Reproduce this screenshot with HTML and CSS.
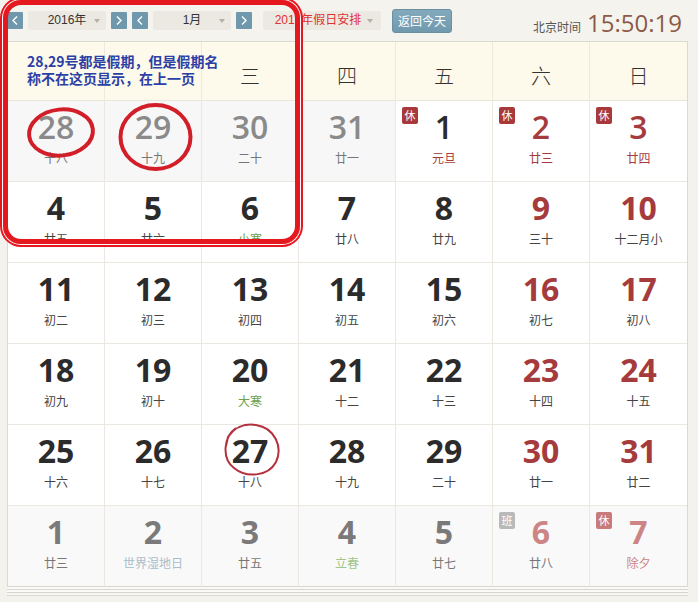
FILE: index.html
```html
<!DOCTYPE html>
<html lang="zh-CN">
<head>
<meta charset="utf-8">
<title>万年历</title>
<link rel="stylesheet" href="styles.css">
</head>
<body>
<div class="page">
  <div class="topbar">
    <span class="arrow"><svg viewBox="0 0 16 17" width="16" height="17"><path d="M10 4.5 L6 8.5 L10 12.5" fill="none" stroke="#fff" stroke-width="1.4"/></svg></span>
    <span class="sel sel-ym">2016年<i class="caret"></i></span>
    <span class="arrow"><svg viewBox="0 0 16 17" width="16" height="17"><path d="M6 4.5 L10 8.5 L6 12.5" fill="none" stroke="#fff" stroke-width="1.4"/></svg></span>
    <span class="arrow arrow-gap"><svg viewBox="0 0 16 17" width="16" height="17"><path d="M10 4.5 L6 8.5 L10 12.5" fill="none" stroke="#fff" stroke-width="1.4"/></svg></span>
    <span class="sel sel-ym">1月<i class="caret"></i></span>
    <span class="arrow"><svg viewBox="0 0 16 17" width="16" height="17"><path d="M6 4.5 L10 8.5 L6 12.5" fill="none" stroke="#fff" stroke-width="1.4"/></svg></span>
    <span class="sel sel-hol">2016年假日安排<i class="caret caret-inline"></i></span>
    <span class="today-btn">返回今天</span>
    <span class="clock"><span class="clock-label">北京时间</span><span class="clock-time">15:50:19</span></span>
  </div>

  <div class="cal">
    <div class="week">
      <div class="wd"></div>
      <div class="wd"></div>
      <div class="wd">三</div>
      <div class="wd">四</div>
      <div class="wd">五</div>
      <div class="wd">六</div>
      <div class="wd">日</div>
    </div>
    <div class="grid">
      <div class="cell other"><div class="num">28</div><div class="lunar">十八</div></div>
      <div class="cell other"><div class="num">29</div><div class="lunar">十九</div></div>
      <div class="cell other"><div class="num">30</div><div class="lunar">二十</div></div>
      <div class="cell other"><div class="num">31</div><div class="lunar">廿一</div></div>
      <div class="cell first"><span class="badge">休</span><div class="num">1</div><div class="lunar red">元旦</div></div>
      <div class="cell first wkend"><span class="badge">休</span><div class="num">2</div><div class="lunar red">廿三</div></div>
      <div class="cell first wkend last-col"><span class="badge">休</span><div class="num">3</div><div class="lunar red">廿四</div></div>

      <div class="cell"><div class="num">4</div><div class="lunar">廿五</div></div>
      <div class="cell"><div class="num">5</div><div class="lunar">廿六</div></div>
      <div class="cell"><div class="num">6</div><div class="lunar green">小寒</div></div>
      <div class="cell"><div class="num">7</div><div class="lunar">廿八</div></div>
      <div class="cell"><div class="num">8</div><div class="lunar">廿九</div></div>
      <div class="cell wkend"><div class="num">9</div><div class="lunar">三十</div></div>
      <div class="cell wkend last-col"><div class="num">10</div><div class="lunar">十二月小</div></div>

      <div class="cell"><div class="num">11</div><div class="lunar">初二</div></div>
      <div class="cell"><div class="num">12</div><div class="lunar">初三</div></div>
      <div class="cell"><div class="num">13</div><div class="lunar">初四</div></div>
      <div class="cell"><div class="num">14</div><div class="lunar">初五</div></div>
      <div class="cell"><div class="num">15</div><div class="lunar">初六</div></div>
      <div class="cell wkend"><div class="num">16</div><div class="lunar">初七</div></div>
      <div class="cell wkend last-col"><div class="num">17</div><div class="lunar">初八</div></div>

      <div class="cell"><div class="num">18</div><div class="lunar">初九</div></div>
      <div class="cell"><div class="num">19</div><div class="lunar">初十</div></div>
      <div class="cell"><div class="num">20</div><div class="lunar green">大寒</div></div>
      <div class="cell"><div class="num">21</div><div class="lunar">十二</div></div>
      <div class="cell"><div class="num">22</div><div class="lunar">十三</div></div>
      <div class="cell wkend"><div class="num">23</div><div class="lunar">十四</div></div>
      <div class="cell wkend last-col"><div class="num">24</div><div class="lunar">十五</div></div>

      <div class="cell"><div class="num">25</div><div class="lunar">十六</div></div>
      <div class="cell"><div class="num">26</div><div class="lunar">十七</div></div>
      <div class="cell"><div class="num">27</div><div class="lunar">十八</div></div>
      <div class="cell"><div class="num">28</div><div class="lunar">十九</div></div>
      <div class="cell"><div class="num">29</div><div class="lunar">二十</div></div>
      <div class="cell wkend"><div class="num">30</div><div class="lunar">廿一</div></div>
      <div class="cell wkend last-col"><div class="num">31</div><div class="lunar">廿二</div></div>

      <div class="cell next"><div class="num">1</div><div class="lunar">廿三</div></div>
      <div class="cell next"><div class="num">2</div><div class="lunar blue">世界湿地日</div></div>
      <div class="cell next"><div class="num">3</div><div class="lunar">廿五</div></div>
      <div class="cell next"><div class="num">4</div><div class="lunar green">立春</div></div>
      <div class="cell next"><div class="num">5</div><div class="lunar">廿七</div></div>
      <div class="cell next wkend"><span class="badge work">班</span><div class="num">6</div><div class="lunar">廿八</div></div>
      <div class="cell next wkend last-col"><span class="badge">休</span><div class="num">7</div><div class="lunar red">除夕</div></div>
    </div>
  </div>

  <div class="note">28,29号都是假期，但是假期名<br>称不在这页显示，在上一页</div>
  <div class="frame"></div>
  <svg class="marks" width="698" height="602" viewBox="0 0 698 602">
    <ellipse cx="61" cy="132.5" rx="32" ry="23" fill="none" stroke="#d21e28" stroke-width="4" transform="rotate(-6 61 132.5)"/>
    <ellipse cx="155.5" cy="137" rx="35" ry="32" fill="none" stroke="#d21e28" stroke-width="4"/>
    <path d="M236 428 C224 436, 221 458, 234 468 C246 478, 268 477, 276 462 C283 447, 275 428, 256 425 C244 423, 234 428, 228 437 L226 446" fill="none" stroke="#b3323e" stroke-width="2"/>
  </svg>
</div>
</body>
</html>
```

FILE: styles.css
```css
html, body {
  margin: 0;
  padding: 0;
}
body {
  background: #f4f2ed;
  width: 698px;
  height: 602px;
  overflow: hidden;
  font-family: "Noto Sans CJK SC", "Noto Sans", sans-serif;
}
.page {
  position: relative;
  width: 698px;
  height: 602px;
}

/* top bar */
.topbar {
  height: 41px;
  display: flex;
  align-items: center;
  padding-left: 7px;
  box-sizing: border-box;
  background: #f5f3ee;
}
.arrow {
  width: 16px;
  height: 17px;
  background: #6f98ac;
  border-radius: 1px;
  display: block;
  flex: none;
}
.arrow svg { display: block; }
.sel {
  position: relative;
  height: 19px;
  line-height: 19px;
  background: #ece9e2;
  border-radius: 2px;
  font-family: "Liberation Sans", "Noto Sans CJK SC", sans-serif;
  font-size: 12px;
  color: #333;
  text-align: center;
  box-sizing: border-box;
  margin: 0 5px;
  flex: none;
}
.sel-ym { width: 78px; }
.arrow-gap { margin-left: 5px; }
.sel-hol {
  width: 118px;
  margin-left: 11px;
  margin-right: 11px;
  color: #e0312f;
  padding-right: 8px;
}
.caret {
  position: absolute;
  right: 6px;
  top: 8px;
  width: 0;
  height: 0;
  border-left: 3.5px solid transparent;
  border-right: 3.5px solid transparent;
  border-top: 4px solid #b4b0a8;
}
.caret-inline { right: 8px; }
.today-btn {
  width: 60px;
  height: 24px;
  line-height: 22px;
  box-sizing: border-box;
  background: linear-gradient(#83a9bc, #7199ad);
  border: 1px solid #6b90a3;
  border-radius: 3px;
  color: #fff;
  font-size: 12px;
  text-align: center;
  flex: none;
}
.clock {
  margin-left: auto;
  margin-right: 16px;
  display: flex;
  align-items: baseline;
  padding-top: 3px;
}
.clock-label {
  font-size: 12px;
  color: #555;
  margin-right: 6px;
}
.clock-time {
  font-family: "Open Sans", sans-serif;
  font-size: 24px;
  color: #8b5a48;
  letter-spacing: 0;
}

/* calendar */
.cal {
  margin-left: 7px;
  width: 681px;
  box-sizing: border-box;
  border: 1px solid #dcd9d2;
  border-bottom: none;
  background: #fff;
  box-shadow: 0 2px 0 #fbfaf8, 0 3px 0 #d8d5cf, 0 5px 0 #fbfaf8, 0 6px 0 #d8d5cf, 0 8px 0 #f7f6f2, 0 9px 0 #dedbd5;
}
.week, .grid {
  display: grid;
  grid-template-columns: repeat(7, 97px);
}
.wd {
  height: 59px;
  box-sizing: border-box;
  border-right: 1px solid #eeeadb;
  border-bottom: 1px solid #e9e5da;
  background: #fdfaec;
  text-align: center;
  padding-top: 24px;
  line-height: 20px;
  font-size: 20px;
  font-weight: 300;
  color: #333;
}
.wd:last-child { border-right: none; }
.cell {
  position: relative;
  height: 81px;
  box-sizing: border-box;
  border-right: 1px solid #ebe8e2;
  border-bottom: 1px solid #ebe8e2;
  text-align: center;
  padding-top: 8px;
  background: #fff;
}
.cell.last-col { border-right: none; }
.num {
  font-family: "Open Sans", sans-serif;
  font-weight: 700;
  font-size: 32px;
  line-height: 36px;
  color: #2b2b2b;
}
.lunar {
  margin-top: 5px;
  font-size: 12px;
  line-height: 16px;
  color: #444;
}
.wkend .num { color: #a53b3d; }
.lunar.red { color: #a53b3d; }
.lunar.green { color: #6fa04c; }
.lunar.blue { color: #a9bccb; }
.first .num { font-weight: 600; }
.other { background: #f7f7f7; }
.other .num { color: #8a8a8a; font-weight: 600; }
.other .lunar { color: #777; }
.next {
  background: #f9f9f9;
  border-bottom-color: #d8d5cf;
}
.next .num { color: #7a7a7a; }
.next .lunar { color: #777; }
.next.wkend .num { color: #cc8485; }
.next .lunar.red { color: #cc8485; }
.next .lunar.green { color: #a2c58a; }
.next .lunar.blue { color: #a9bccb; }
.badge {
  position: absolute;
  left: 6px;
  top: 6px;
  width: 16px;
  height: 17px;
  line-height: 16px;
  border-radius: 2px;
  background: #a8393b;
  color: #fff;
  font-size: 11px;
  text-align: center;
}
.next .badge { background: #c97a7b; }
.next .badge.work { background: #b9b9b9; }

/* annotations */
.note {
  position: absolute;
  left: 27px;
  top: 53px;
  font-size: 14px;
  font-weight: 700;
  line-height: 17px;
  color: #2c3fa5;
  white-space: nowrap;
}
.frame {
  position: absolute;
  left: 3px;
  top: 0;
  width: 297px;
  height: 244px;
  box-sizing: border-box;
  border: 5px solid #e5181f;
  border-radius: 18px;
  box-shadow: 0 0 0 1px #fff, 0 0 0 3px #e5181f;
}
.marks {
  position: absolute;
  left: 0;
  top: 0;
  pointer-events: none;
}
```
